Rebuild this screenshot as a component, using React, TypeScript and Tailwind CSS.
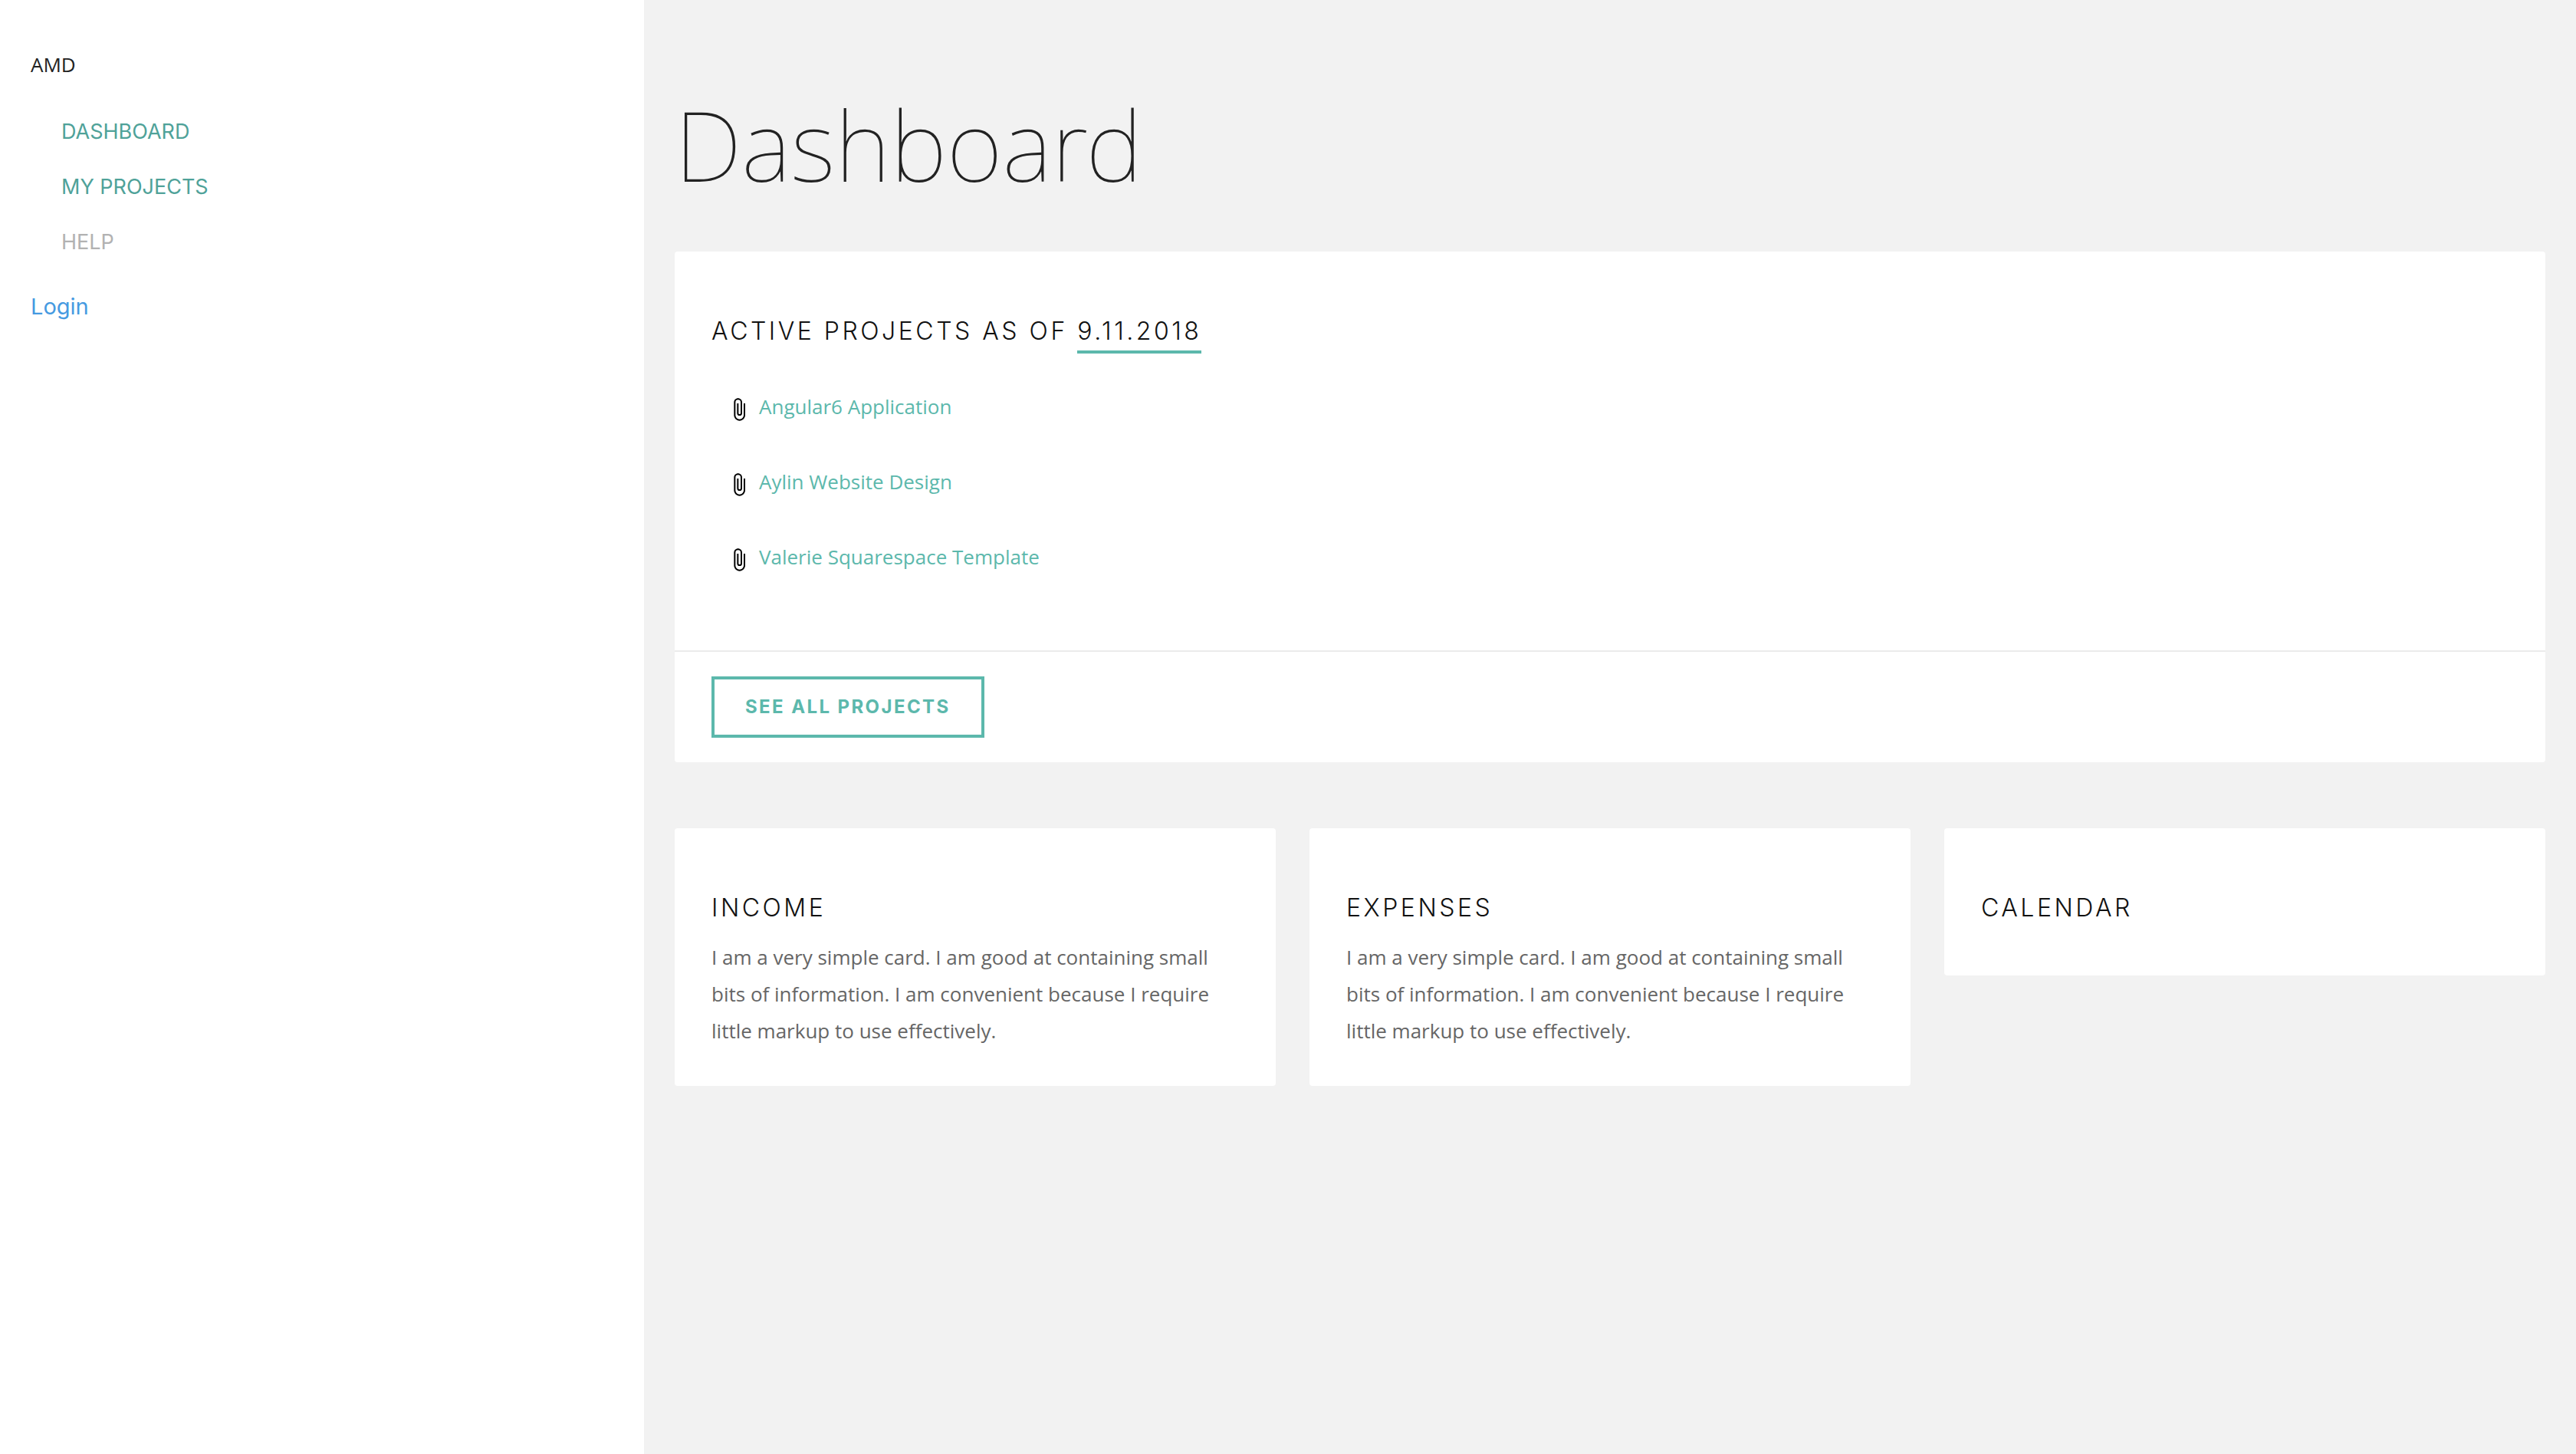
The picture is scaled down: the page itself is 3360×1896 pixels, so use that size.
import type { ReactNode } from "react";
import { MdAttachFile } from "react-icons/md";

const navItems = [
  { label: "DASHBOARD", className: "text-[#4fa299]" },
  { label: "MY PROJECTS", className: "text-[#4fa299]" },
  { label: "HELP", className: "text-[#b2b2b2]" },
];

const projects = [
  "Angular6 Application",
  "Aylin Website Design",
  "Valerie Squarespace Template",
];

const cardText =
  "I am a very simple card. I am good at containing small bits of information. I am convenient because I require little markup to use effectively.";

const cards = [
  { title: "INCOME", body: cardText },
  { title: "EXPENSES", body: cardText },
  { title: "CALENDAR", body: "" },
];

function CardTitle({ children }: { children: ReactNode }) {
  return (
    <h2 className="mb-4 font-['Inter',sans-serif] text-[32px] leading-[48px] font-light tracking-[0.11em] text-[#111]">
      {children}
    </h2>
  );
}

function Sidebar() {
  return (
    <aside className="w-1/4 shrink-0 bg-white px-10 pt-[60px]">
      <p className="text-[26px] leading-[48px] text-[#222]">AMD</p>
      <nav className="mt-7 mb-6 font-['Inter',sans-serif]">
        <ul className="pl-10">
          {navItems.map((item) => (
            <li key={item.label} className="text-[27px] leading-[72px]">
              <a href="#" className={item.className}>
                {item.label}
              </a>
            </li>
          ))}
        </ul>
      </nav>
      <a href="#" className="block font-['Inter',sans-serif] text-[29px] leading-[48px] text-[#459ae1]">
        Login
      </a>
    </aside>
  );
}

export default function App() {
  return (
    <div className="flex min-h-screen bg-[#f2f2f2] font-['Open_Sans',sans-serif] text-[26px] leading-[48px]">
      <Sidebar />
      <main className="min-w-0 flex-1 px-10 pt-27 pb-10">
        <h1 className="mb-15 font-['Noto_Sans',sans-serif] text-[126px] leading-[160px] font-thin text-[#222]">
          Dashboard
        </h1>

        <section className="rounded bg-white">
          <div className="px-12 pt-20 pb-[73px]">
            <CardTitle>
              ACTIVE PROJECTS AS OF{" "}
              <span className="border-b-4 border-[#5cb8ac] pb-1.5">9.11.2018</span>
            </CardTitle>
            <ul className="pt-[9px] pl-5">
              {projects.map((name) => (
                <li key={name} className="flex h-[98px] items-center gap-2.5">
                  <MdAttachFile className="mt-2 size-8 text-black" aria-hidden />
                  <a href="#" className="text-[#5cb8ac]">
                    {name}
                  </a>
                </li>
              ))}
            </ul>
          </div>
          <div className="border-t-2 border-[#ebebeb] px-12 py-8">
            <button
              type="button"
              className="flex h-20 items-center border-4 border-[#5cb8ac] px-10 font-['Inter',sans-serif] text-[24px] leading-[36px] font-bold tracking-[0.1em] text-[#5cb8ac]"
            >
              SEE ALL PROJECTS
            </button>
          </div>
        </section>

        <div className="mt-[86px] grid grid-cols-3 items-start gap-11">
          {cards.map((card) => (
            <section key={card.title} className="rounded bg-white px-12 pt-20 pb-12">
              <CardTitle>{card.title}</CardTitle>
              {card.body && <p className="text-[#666]">{card.body}</p>}
            </section>
          ))}
        </div>
      </main>
    </div>
  );
}
